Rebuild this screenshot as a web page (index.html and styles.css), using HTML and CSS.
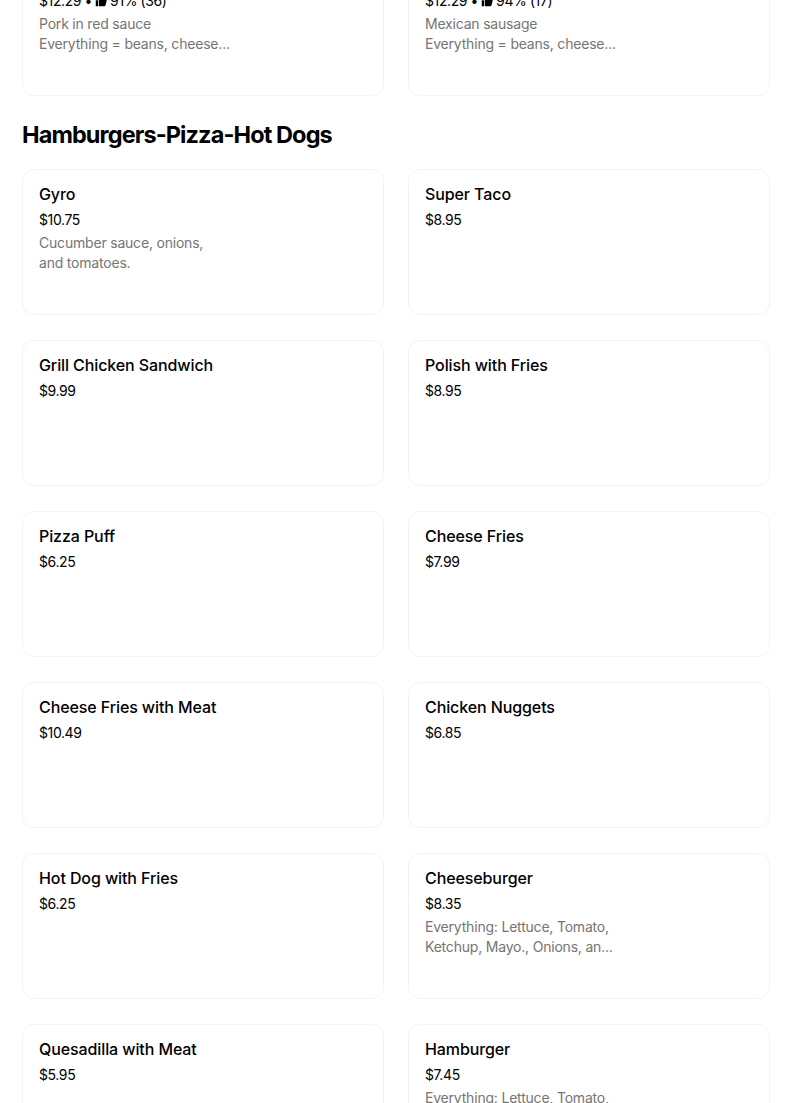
FILE: index.html
```html
<!DOCTYPE html>
<html lang="en">
<head>
<meta charset="utf-8">
<title>Menu</title>
<link rel="stylesheet" href="styles.css">
</head>
<body>
<main class="menu">
  <section class="section section-prev">
    <div class="grid">
      <div class="card">
        <div class="title">Cochinita Pibil Burrito</div>
        <div class="price">$12.29 • <svg class="thumb" viewBox="0 0 16 16" width="12" height="12"><path d="M1 7h3v8H1zM5 7l3-6c1.2 0 2 .8 2 2v3h4.2c.9 0 1.5.8 1.3 1.6l-1.5 6.2c-.2.7-.8 1.2-1.5 1.2H5z" fill="currentColor"/></svg> 91% (36)</div>
        <div class="desc">Pork in red sauce<br>Everything = beans, cheese...</div>
      </div>
      <div class="card">
        <div class="title">Chorizo Burrito</div>
        <div class="price">$12.29 • <svg class="thumb" viewBox="0 0 16 16" width="12" height="12"><path d="M1 7h3v8H1zM5 7l3-6c1.2 0 2 .8 2 2v3h4.2c.9 0 1.5.8 1.3 1.6l-1.5 6.2c-.2.7-.8 1.2-1.5 1.2H5z" fill="currentColor"/></svg> 94% (17)</div>
        <div class="desc">Mexican sausage<br>Everything = beans, cheese...</div>
      </div>
    </div>
  </section>

  <section class="section">
    <h2 class="section-title">Hamburgers-Pizza-Hot Dogs</h2>
    <div class="grid">
      <div class="card">
        <div class="title">Gyro</div>
        <div class="price">$10.75</div>
        <div class="desc">Cucumber sauce, onions,<br>and tomatoes.</div>
      </div>
      <div class="card">
        <div class="title">Super Taco</div>
        <div class="price">$8.95</div>
      </div>
      <div class="card">
        <div class="title">Grill Chicken Sandwich</div>
        <div class="price">$9.99</div>
      </div>
      <div class="card">
        <div class="title">Polish with Fries</div>
        <div class="price">$8.95</div>
      </div>
      <div class="card">
        <div class="title">Pizza Puff</div>
        <div class="price">$6.25</div>
      </div>
      <div class="card">
        <div class="title">Cheese Fries</div>
        <div class="price">$7.99</div>
      </div>
      <div class="card">
        <div class="title">Cheese Fries with Meat</div>
        <div class="price">$10.49</div>
      </div>
      <div class="card">
        <div class="title">Chicken Nuggets</div>
        <div class="price">$6.85</div>
      </div>
      <div class="card">
        <div class="title">Hot Dog with Fries</div>
        <div class="price">$6.25</div>
      </div>
      <div class="card">
        <div class="title">Cheeseburger</div>
        <div class="price">$8.35</div>
        <div class="desc">Everything: Lettuce, Tomato,<br>Ketchup, Mayo., Onions, an...</div>
      </div>
      <div class="card">
        <div class="title">Quesadilla with Meat</div>
        <div class="price">$5.95</div>
      </div>
      <div class="card">
        <div class="title">Hamburger</div>
        <div class="price">$7.45</div>
        <div class="desc">Everything: Lettuce, Tomato,<br>Ketchup, Mayo., Onions, an...</div>
      </div>
    </div>
  </section>
</main>
</body>
</html>
```

FILE: styles.css
```css
html, body {
  margin: 0;
  padding: 0;
  background: #ffffff;
}

body {
  font-family: Inter, "Noto Sans", "Liberation Sans", sans-serif;
  color: #000000;
  overflow: hidden;
}

.menu {
  width: 748px;
  padding-left: 22px;
  margin-top: -50px;
}

.section-title {
  margin: 23px 0 18px;
  font-size: 23.5px;
  line-height: 32px;
  font-weight: 700;
  letter-spacing: -0.9px;
}

.grid {
  display: grid;
  grid-template-columns: 1fr 1fr;
  column-gap: 24px;
  row-gap: 25px;
}

.card {
  height: 146px;
  box-sizing: border-box;
  border: 1px solid #f3f3f3;
  border-radius: 12px;
  padding: 14px 16px 0;
}

.title {
  font-size: 16px;
  line-height: 20px;
  font-weight: 500;
  letter-spacing: -0.1px;
}

.price {
  margin-top: 6px;
  font-size: 14px;
  line-height: 20px;
  letter-spacing: -0.4px;
  display: flex;
  align-items: center;
  gap: 3px;
}

.thumb {
  display: inline-block;
}

.desc {
  margin-top: 3px;
  font-size: 14px;
  line-height: 20px;
  color: #757575;
  letter-spacing: -0.2px;
}
```
